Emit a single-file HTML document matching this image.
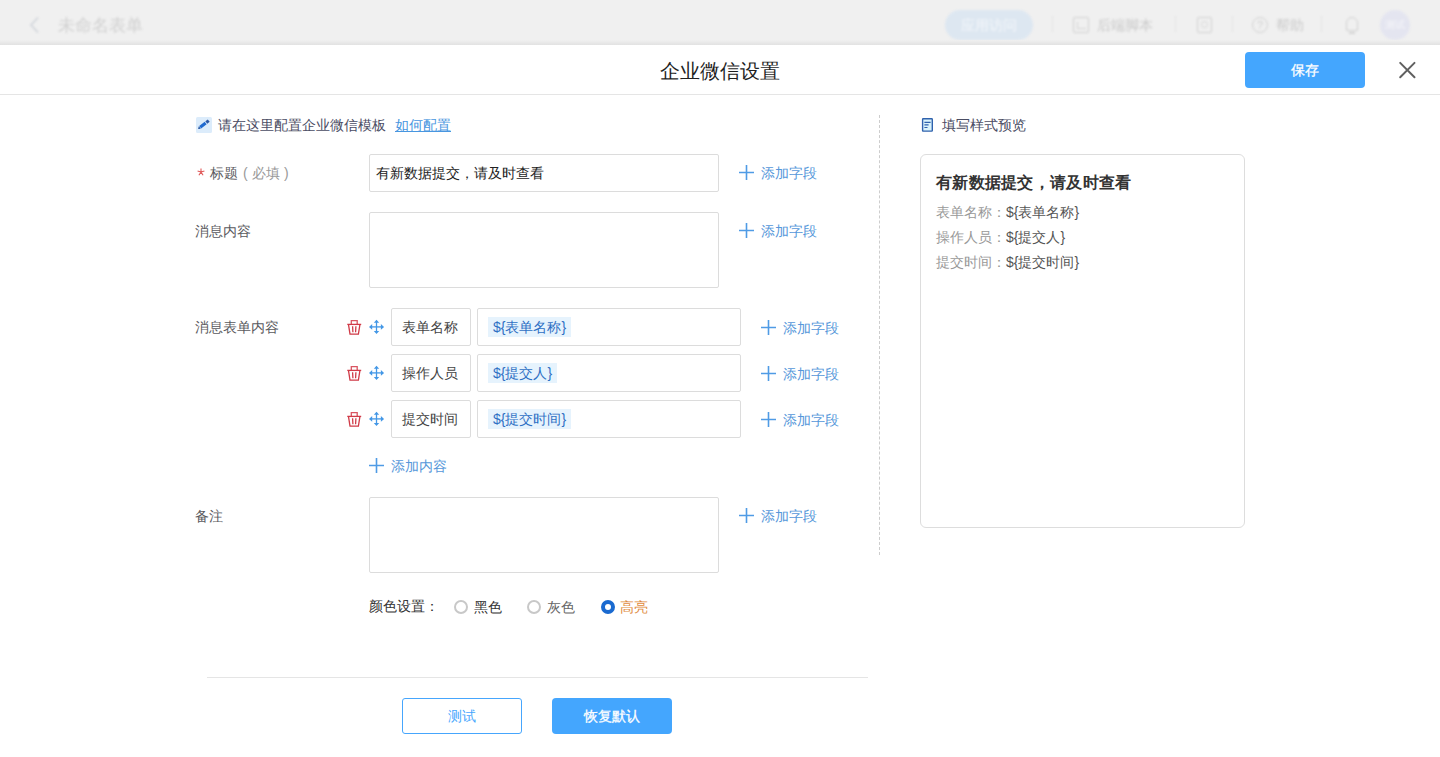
<!DOCTYPE html>
<html><head><meta charset="utf-8">
<style>
*{margin:0;padding:0;box-sizing:border-box}
html,body{width:1440px;height:757px;overflow:hidden;background:#fff;font-family:"Liberation Sans",sans-serif;color:#333}
.abs{position:absolute}
#topbar{left:0;top:0;width:1440px;height:45px;background:#f0f0f0;overflow:hidden}
#topbar .blur{filter:blur(1.2px)}
#shadow{left:0;top:40px;width:1440px;height:5px;background:linear-gradient(#f0f0f0,#e2e2e2)}
#hdr{left:0;top:45px;width:1440px;height:50px;background:#fff;border-bottom:1px solid #e5e5e5}
.title{left:0;width:1440px;top:58px;text-align:center;font-size:20px;color:#1f1f1f;line-height:26px}
.btn-blue{background:#44a6fe;color:#fff;border-radius:4px;text-align:center;font-size:14px;-webkit-text-stroke:0.3px #fff}
.lbl{font-size:14px;color:#5a5a5e;line-height:18px}
.box{border:1px solid #dcdcdc;border-radius:2px;background:#fff}
.add{font-size:14px;color:#5697da;line-height:18px}
.add .plus{display:inline-block;vertical-align:middle}
.tag{background:#e6f3fd;color:#2f70c4;font-size:14px;line-height:20px;padding:0 5px 0 5px;border-radius:0}
</style></head><body>
<div id="topbar" class="abs">
 <div class="blur">
  <svg class="abs" style="left:28px;top:16px" width="14" height="18" viewBox="0 0 14 18"><path d="M10 1.5L3 9l7 7.5" fill="none" stroke="#d0d4da" stroke-width="1.6"/></svg>
  <div class="abs" style="left:58px;top:16px;font-size:17px;line-height:20px;color:#d0d0d0">未命名表单</div>
  <div class="abs" style="left:945px;top:10px;width:88px;height:30px;border-radius:15px;background:#dde7f1"></div>
  <div class="abs" style="left:961px;top:16px;font-size:14px;line-height:18px;color:#f4f7fa">应用访问</div>
  <div class="abs" style="left:1052px;top:16px;width:1px;height:16px;background:#e4e4e4"></div>
  <div class="abs" style="left:1073px;top:17px;width:16px;height:16px;border:1.5px solid #d0d0d0;border-radius:2px"></div>
  <div class="abs" style="left:1097px;top:16px;font-size:14px;line-height:18px;color:#c9c9c9">后端脚本</div>
  <div class="abs" style="left:1175px;top:16px;width:1px;height:16px;background:#e4e4e4"></div>
  <div class="abs" style="left:1197px;top:17px;width:15px;height:16px;border:1.5px solid #d0d0d0;border-radius:2px"></div>
  <div class="abs" style="left:1232px;top:16px;width:1px;height:16px;background:#e4e4e4"></div>
  <div class="abs" style="left:1252px;top:17px;width:16px;height:16px;border:1.5px solid #d0d0d0;border-radius:50%"></div>
  <div class="abs" style="left:1276px;top:16px;font-size:14px;line-height:18px;color:#c9c9c9">帮助</div>
  <div class="abs" style="left:1321px;top:16px;width:1px;height:16px;background:#e4e4e4"></div>
  <div class="abs" style="left:1346px;top:17px;width:12px;height:14px;border:1.5px solid #d0d0d0;border-radius:6px 6px 1px 1px"></div>
  <div class="abs" style="left:1380px;top:10px;width:30px;height:30px;border-radius:50%;background:#e4e5f0"></div>
  <div class="abs" style="left:1385px;top:19px;font-size:10px;line-height:12px;color:#f6f6fa">测试</div>
  <div class="abs" style="left:1257px;top:18px;font-size:11px;line-height:14px;color:#cfcfcf">?</div>
  <div class="abs" style="left:1201px;top:21px;width:7px;height:7px;border:1.2px solid #d4d4d4;border-radius:50%"></div>
  <div class="abs" style="left:1077px;top:22px;width:9px;height:7px;border-bottom:1.2px solid #d4d4d4;border-left:1.2px solid #d4d4d4"></div>
  <div class="abs" style="left:1349px;top:32px;width:6px;height:2px;background:#d4d4d4"></div>
 </div>
</div>
<div id="shadow" class="abs"></div>
<div id="hdr" class="abs"></div>
<div class="abs title">企业微信设置</div>
<div class="abs btn-blue" style="left:1245px;top:52px;width:120px;height:36px;line-height:36px">保存</div>
<svg class="abs" style="left:1397px;top:60px" width="20" height="20" viewBox="0 0 20 20"><path d="M3.2 2.9L17.5 17.2M17.5 2.9L3.2 17.2" stroke="#606060" stroke-width="2" stroke-linecap="round"/></svg>

<!-- left form -->
<svg class="abs" style="left:196px;top:117px" width="16" height="16" viewBox="0 0 16 16"><rect x="0" y="0" width="16" height="16" rx="1.5" fill="#dcecfb"/><path d="M2.1 11.9L2.87 9.32 4.79 11.76z" fill="#1d4f9e"/><path d="M3.19 9.08L8.70 4.76 10.62 7.20 5.11 11.52z" fill="#1f6ad0"/><path d="M9.33 4.27L11.74 2.38 13.66 4.82 11.25 6.71z" fill="#2b58a6"/></svg>
<div class="abs lbl" style="left:218px;top:116px;color:#4a4c63">请在这里配置企业微信模板</div>
<div class="abs lbl" style="left:395px;top:116px;color:#4896e0;text-decoration:underline">如何配置</div>

<svg class="abs" style="left:197px;top:168px" width="8" height="8" viewBox="0 0 8 8"><path d="M4 0.5v3.6M4 4.1L0.6 3M4 4.1L7.4 3M4 4.1L1.9 7.2M4 4.1L6.1 7.2" stroke="#e05a5a" stroke-width="1.1"/></svg>
<div class="abs lbl" style="left:210px;top:164px">标题</div>
<div class="abs lbl" style="left:243px;top:164px;color:#999">(</div>
<div class="abs lbl" style="left:252px;top:164px;color:#999">必填</div>
<div class="abs lbl" style="left:284px;top:164px;color:#999">)</div>
<div class="abs box" style="left:369px;top:154px;width:350px;height:38px"></div>
<div class="abs" style="left:376px;top:164px;font-size:14px;color:#222;line-height:18px">有新数据提交，请及时查看</div>
<div class="abs add" style="left:739px;top:164px"><svg class="plus" width="15" height="15" viewBox="0 0 15 15" style="position:absolute;left:0;top:1px"><path d="M7.5 0v15M0 7.5h15" stroke="#4f9be5" stroke-width="1.6"/></svg><span style="margin-left:22px">添加字段</span></div>

<div class="abs lbl" style="left:195px;top:222px">消息内容</div>
<div class="abs box" style="left:369px;top:212px;width:350px;height:76px"></div>
<div class="abs add" style="left:739px;top:222px"><svg class="plus" width="15" height="15" viewBox="0 0 15 15" style="position:absolute;left:0;top:1px"><path d="M7.5 0v15M0 7.5h15" stroke="#4f9be5" stroke-width="1.6"/></svg><span style="margin-left:22px">添加字段</span></div>

<div class="abs lbl" style="left:195px;top:318px">消息表单内容</div>

<svg class="abs" style="left:346px;top:319px" width="16" height="16" viewBox="0 0 16 16"><g fill="none" stroke="#d03a47" stroke-width="1.3"><path d="M5.3 5.2V1.6h5.9v3.6" stroke="#d95561"/><path d="M1.3 5.4h13.9"/><path d="M2.5 5.6l1.5 9.6h8.4l1.5-9.6"/><path d="M6.6 7.2l0.3 6M9.9 7.2l-0.3 6"/></g></svg>
<svg class="abs" style="left:366px;top:316px" width="22" height="22" viewBox="0 0 22 22"><g fill="#4397e6"><path d="M4.5 10.25h12v1.3h-12z"/><path d="M9.85 5.5h1.3v11h-1.3z"/><path d="M3 10.9L6.2 8.1v5.6z"/><path d="M18.1 10.9L14.9 8.1v5.6z"/><path d="M10.5 3.8L7.8 6.7h5.4z"/><path d="M10.5 17.9L7.8 15h5.4z"/></g></svg>
<div class="abs box" style="left:391px;top:308px;width:80px;height:38px;line-height:36px;text-align:center;font-size:14px;color:#444;padding-right:2px">表单名称</div>
<div class="abs box" style="left:477px;top:308px;width:264px;height:38px"></div>
<div class="abs tag" style="left:488px;top:317px">${表单名称}</div>
<div class="abs add" style="left:761px;top:319px"><svg class="plus" width="15" height="15" viewBox="0 0 15 15" style="position:absolute;left:0;top:1px"><path d="M7.5 0v15M0 7.5h15" stroke="#4f9be5" stroke-width="1.6"/></svg><span style="margin-left:22px">添加字段</span></div>
<svg class="abs" style="left:346px;top:365px" width="16" height="16" viewBox="0 0 16 16"><g fill="none" stroke="#d03a47" stroke-width="1.3"><path d="M5.3 5.2V1.6h5.9v3.6" stroke="#d95561"/><path d="M1.3 5.4h13.9"/><path d="M2.5 5.6l1.5 9.6h8.4l1.5-9.6"/><path d="M6.6 7.2l0.3 6M9.9 7.2l-0.3 6"/></g></svg>
<svg class="abs" style="left:366px;top:362px" width="22" height="22" viewBox="0 0 22 22"><g fill="#4397e6"><path d="M4.5 10.25h12v1.3h-12z"/><path d="M9.85 5.5h1.3v11h-1.3z"/><path d="M3 10.9L6.2 8.1v5.6z"/><path d="M18.1 10.9L14.9 8.1v5.6z"/><path d="M10.5 3.8L7.8 6.7h5.4z"/><path d="M10.5 17.9L7.8 15h5.4z"/></g></svg>
<div class="abs box" style="left:391px;top:354px;width:80px;height:38px;line-height:36px;text-align:center;font-size:14px;color:#444;padding-right:2px">操作人员</div>
<div class="abs box" style="left:477px;top:354px;width:264px;height:38px"></div>
<div class="abs tag" style="left:488px;top:363px">${提交人}</div>
<div class="abs add" style="left:761px;top:365px"><svg class="plus" width="15" height="15" viewBox="0 0 15 15" style="position:absolute;left:0;top:1px"><path d="M7.5 0v15M0 7.5h15" stroke="#4f9be5" stroke-width="1.6"/></svg><span style="margin-left:22px">添加字段</span></div>
<svg class="abs" style="left:346px;top:411px" width="16" height="16" viewBox="0 0 16 16"><g fill="none" stroke="#d03a47" stroke-width="1.3"><path d="M5.3 5.2V1.6h5.9v3.6" stroke="#d95561"/><path d="M1.3 5.4h13.9"/><path d="M2.5 5.6l1.5 9.6h8.4l1.5-9.6"/><path d="M6.6 7.2l0.3 6M9.9 7.2l-0.3 6"/></g></svg>
<svg class="abs" style="left:366px;top:408px" width="22" height="22" viewBox="0 0 22 22"><g fill="#4397e6"><path d="M4.5 10.25h12v1.3h-12z"/><path d="M9.85 5.5h1.3v11h-1.3z"/><path d="M3 10.9L6.2 8.1v5.6z"/><path d="M18.1 10.9L14.9 8.1v5.6z"/><path d="M10.5 3.8L7.8 6.7h5.4z"/><path d="M10.5 17.9L7.8 15h5.4z"/></g></svg>
<div class="abs box" style="left:391px;top:400px;width:80px;height:38px;line-height:36px;text-align:center;font-size:14px;color:#444;padding-right:2px">提交时间</div>
<div class="abs box" style="left:477px;top:400px;width:264px;height:38px"></div>
<div class="abs tag" style="left:488px;top:409px">${提交时间}</div>
<div class="abs add" style="left:761px;top:411px"><svg class="plus" width="15" height="15" viewBox="0 0 15 15" style="position:absolute;left:0;top:1px"><path d="M7.5 0v15M0 7.5h15" stroke="#4f9be5" stroke-width="1.6"/></svg><span style="margin-left:22px">添加字段</span></div>
<div class="abs add" style="left:369px;top:457px"><svg class="plus" width="15" height="15" viewBox="0 0 15 15" style="position:absolute;left:0;top:1px"><path d="M7.5 0v15M0 7.5h15" stroke="#4f9be5" stroke-width="1.6"/></svg><span style="margin-left:22px">添加内容</span></div>
<div class="abs lbl" style="left:369px;top:597px;color:#333">颜色设置：</div>
<div class="abs" style="left:454px;top:600px;width:14px;height:14px;border:2px solid #c8c8c8;border-radius:50%"></div>
<div class="abs lbl" style="left:474px;top:598px;color:#333">黑色</div>
<div class="abs" style="left:527px;top:600px;width:14px;height:14px;border:2px solid #c8c8c8;border-radius:50%"></div>
<div class="abs lbl" style="left:547px;top:598px;color:#666">灰色</div>
<div class="abs" style="left:601px;top:600px;width:14px;height:14px;border:4px solid #1a6ad0;border-radius:50%"></div>
<div class="abs lbl" style="left:620px;top:598px;color:#e08a3c">高亮</div>
<div class="abs lbl" style="left:195px;top:507px">备注</div>
<div class="abs box" style="left:369px;top:497px;width:350px;height:76px"></div>
<div class="abs add" style="left:739px;top:507px"><svg class="plus" width="15" height="15" viewBox="0 0 15 15" style="position:absolute;left:0;top:1px"><path d="M7.5 0v15M0 7.5h15" stroke="#4f9be5" stroke-width="1.6"/></svg><span style="margin-left:22px">添加字段</span></div>

<div class="abs" style="left:207px;top:677px;width:661px;height:1px;background:#e5e5e5"></div>
<div class="abs" style="left:402px;top:698px;width:120px;height:36px;border:1px solid #46a6fd;border-radius:3px;color:#46a6fd;text-align:center;line-height:34px;font-size:14px">测试</div>
<div class="abs btn-blue" style="left:552px;top:698px;width:120px;height:36px;line-height:36px">恢复默认</div>

<div class="abs" style="left:879px;top:115px;height:440px;border-left:1px dashed #cdcdcd"></div>

<!-- preview -->
<svg class="abs" style="left:920px;top:116px" width="16" height="18" viewBox="0 0 16 18"><rect x="2.6" y="2.8" width="9.7" height="12.3" rx="0.6" fill="#d9f3fb" stroke="#2f62ad" stroke-width="1.4"/><path d="M4.4 6.4h6.2M4.4 8.9h4.2M4.4 11.5h3.1" stroke="#2f62ad" stroke-width="1.1"/></svg>
<div class="abs lbl" style="left:942px;top:116px;color:#4a4c63">填写样式预览</div>
<div class="abs" style="left:920px;top:154px;width:325px;height:374px;border:1px solid #ddd;border-radius:6px"></div>
<div class="abs" style="left:936px;top:173px;font-size:16px;font-weight:bold;color:#333;line-height:20px;letter-spacing:0.3px">有新数据提交，请及时查看</div>
<div class="abs" style="left:936px;top:203px;font-size:14px;line-height:18px;color:#999">表单名称：<span style="color:#555">${表单名称}</span></div>
<div class="abs" style="left:936px;top:228px;font-size:14px;line-height:18px;color:#999">操作人员：<span style="color:#555">${提交人}</span></div>
<div class="abs" style="left:936px;top:253px;font-size:14px;line-height:18px;color:#999">提交时间：<span style="color:#555">${提交时间}</span></div>
</body></html>
